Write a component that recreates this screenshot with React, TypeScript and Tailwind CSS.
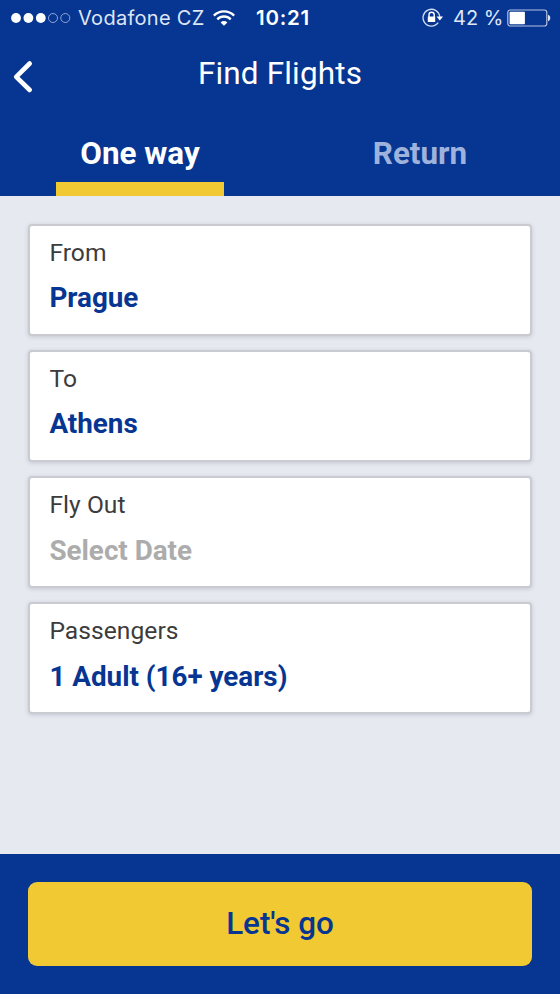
import type { ReactNode } from "react";

function StatusBar() {
  return (
    <div className="flex h-9 items-center font-['Inter',sans-serif] text-[20px] leading-9 text-[#dfe6f4]">
      <svg className="ml-[11px] shrink-0" width="60" height="12" viewBox="0 0 60 12">
        <circle cx="5" cy="6" r="4.9" fill="#fff" />
        <circle cx="17.4" cy="6" r="4.9" fill="#fff" />
        <circle cx="29.8" cy="6" r="4.9" fill="#fff" />
        <circle cx="42" cy="6" r="4.5" fill="none" stroke="#8fa5d2" />
        <circle cx="54.3" cy="6" r="4.5" fill="none" stroke="#8fa5d2" />
      </svg>
      <span className="ml-[7px] w-[127px] whitespace-nowrap tracking-[0.3px]">Vodafone CZ</span>
      <svg className="ml-[8px] shrink-0" width="22" height="16" viewBox="0 0 22 16" fill="none" stroke="#fff" strokeWidth="2.4">
        <path d="M.8 5.6a14.5 14.5 0 0 1 20.4 0" />
        <path d="M4.3 9.3a9.5 9.5 0 0 1 13.4 0" />
        <path d="M7.6 12.4a4.8 4.8 0 0 1 6.8 0L11 15.8z" fill="#fff" stroke="none" />
      </svg>
      <span className="ml-[21px] w-[56px] whitespace-nowrap text-[20.5px] font-semibold tracking-[0.75px] text-white">10:21</span>
      <svg className="ml-[110px] shrink-0" width="22" height="20" viewBox="0 0 22 20">
        <path d="M16.2 14.7A8.4 8.4 0 1 1 17.8 9" fill="none" stroke="#d3dcee" strokeWidth="1.3" />
        <path d="M14.5 8.6h6.6l-3.3 4z" fill="#fff" />
        <path d="M7 9V6.8a2.6 2.6 0 0 1 5.2 0V9" fill="none" stroke="#fff" strokeWidth="1.4" />
        <rect x="5.8" y="8.5" width="7.4" height="5.5" rx=".6" fill="#fff" />
      </svg>
      <span className="ml-[9px] w-[51px] whitespace-nowrap">42 %</span>
      <svg className="ml-[3px] shrink-0" width="44" height="18" viewBox="0 0 44 18">
        <rect x=".8" y="1" width="39" height="16" rx="2.5" fill="none" stroke="#b4c1df" strokeWidth="1.2" />
        <rect x="2.6" y="2.8" width="15.3" height="12.4" rx=".8" fill="#fff" />
        <path d="M41 5.8c3 .5 3 5.9 0 6.4z" fill="#dce3f2" />
      </svg>
    </div>
  );
}

function Field({ label, tone, children }: { label: string; tone: string; children: ReactNode }) {
  return (
    <div className="h-28 rounded-[4px] border-2 border-[#c9cbd0] bg-white pl-[19.4px] pt-[10px] shadow-[0_1px_4px_rgba(60,70,90,0.2)]">
      <div className="h-[34px] text-[24.6px] leading-[34px] tracking-[0.05px] text-[#3c3c3c]">{label}</div>
      <div className={`text-[27.8px] font-bold leading-[36px] ${tone}`}>{children}</div>
    </div>
  );
}

export default function App() {
  return (
    <div className="flex h-[994px] w-[560px] flex-col overflow-hidden bg-[#e6e9f0] font-['Roboto',sans-serif]">
      <header className="h-[196px] bg-[#063592] text-white">
        <StatusBar />
        <div className="grid h-[76px] grid-cols-[60px_1fr_60px]">
          <svg className="ml-[12px] mt-[24px]" width="22" height="34" viewBox="0 0 22 34" fill="none" stroke="#fff" strokeWidth="4.6" strokeLinecap="round" strokeLinejoin="round">
            <path d="M17.7 3.5 4.2 16.8 17.7 30" />
          </svg>
          <h1 className="pt-[18px] text-center text-[31.5px] leading-[40px] tracking-[0.15px]">Find Flights</h1>
        </div>
        <nav className="grid h-[84px] grid-cols-2 text-[31.4px] font-bold leading-[40px]">
          <div className="flex flex-col items-center pt-[22px]">
            <span>One way</span>
            <span className="mt-[8px] h-[14px] w-[168px] bg-[#f1c932]" />
          </div>
          <div className="pt-[22px] text-center text-[#9fb2dc]">Return</div>
        </nav>
      </header>
      <main className="flex h-[658px] flex-col gap-[14px] px-7 pt-7">
        <Field label="From" tone="mt-[10px] text-[#063592]">Prague</Field>
        <Field label="To" tone="mt-[10px] text-[#063592]">Athens</Field>
        <Field label="Fly Out" tone="mt-[11px] text-[#acacac]">Select Date</Field>
        <Field label="Passengers" tone="mt-[11px] text-[#063592]">1 Adult (16+ years)</Field>
      </main>
      <footer className="h-[140px] bg-[#063592] px-7 pt-7">
        <button className="block h-[84px] w-full rounded-[9px] bg-[#f1c932] text-[31.4px] font-medium leading-[84px] text-[#063592]">Let's go</button>
      </footer>
    </div>
  );
}
